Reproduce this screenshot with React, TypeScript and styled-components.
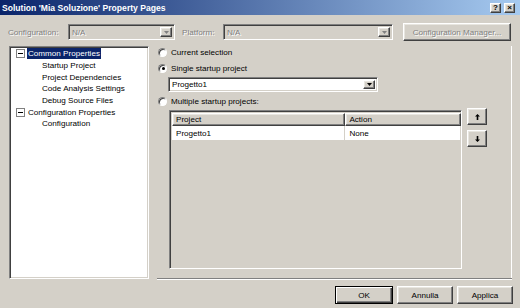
import React from "react";
import styled, { createGlobalStyle, css } from "styled-components";

const GlobalStyle = createGlobalStyle`
  html, body {
    margin: 0;
    padding: 0;
    background: #d4d0c8;
  }
  body {
    font-family: "Liberation Sans", Arial, sans-serif;
    font-size: 8.1px;
    color: #000;
  }
`;

const raised = css`
  border: 1px solid;
  border-color: #ffffff #404040 #404040 #ffffff;
  box-shadow: inset -1px -1px #808080, inset 1px 1px #e8e6e0;
  background: #d4d0c8;
`;

const sunken = css`
  border: 1px solid;
  border-color: #808080 #ffffff #ffffff #808080;
  box-shadow: inset 1px 1px #404040, inset -1px -1px #d4d0c8;
`;

const disabledText = css`
  color: #808080;
  text-shadow: 1px 1px 0 #ffffff;
`;

const Window = styled.div`
  width: 520px;
  height: 308px;
  display: flex;
  flex-direction: column;
  background: #d4d0c8;
  overflow: hidden;
`;

const TitleBar = styled.div`
  height: 15px;
  flex: none;
  display: flex;
  align-items: center;
  justify-content: space-between;
  padding: 0 5px 0 2px;
  background: linear-gradient(to right, #0a246a, #a6caf0);
`;

const Title = styled.span`
  color: #fff;
  font-weight: bold;
  font-size: 8.6px;
`;

const TitleButtons = styled.div`
  display: flex;
  gap: 3px;
`;

const CaptionButton = styled.div`
  ${raised};
  box-sizing: border-box;
  width: 11px;
  height: 10px;
  display: flex;
  align-items: center;
  justify-content: center;
  font-weight: bold;
  font-size: 8px;
  line-height: 1;
`;

const ConfigRow = styled.div`
  display: flex;
  align-items: center;
  height: 18px;
  margin-top: 8px;
  padding-left: 8px;
`;

const ConfigLabel = styled.span<{ $w: number; $ml?: number }>`
  ${disabledText};
  width: ${(p) => p.$w}px;
  margin-left: ${(p) => p.$ml ?? 0}px;
  flex: none;
`;

const Combo = styled.div<{ $w: number; $disabled?: boolean; $h?: number }>`
  ${sunken};
  box-sizing: border-box;
  width: ${(p) => p.$w}px;
  height: ${(p) => p.$h ?? 16}px;
  flex: none;
  display: flex;
  align-items: center;
  padding: 2px 2px 2px 3px;
  background: ${(p) => (p.$disabled ? "#d4d0c8" : "#ffffff")};
  ${(p) => p.$disabled && disabledText};
`;

const ComboText = styled.span`
  flex: 1;
  white-space: nowrap;
`;

const DropButton = styled.div<{ $disabled?: boolean }>`
  ${raised};
  box-sizing: border-box;
  width: 12px;
  height: 100%;
  display: flex;
  align-items: center;
  justify-content: center;
  color: ${(p) => (p.$disabled ? "#808080" : "#000")};
  text-shadow: none;
`;

const PushButton = styled.div<{ $w: number; $default?: boolean; $disabled?: boolean }>`
  ${raised};
  box-sizing: border-box;
  width: ${(p) => p.$w}px;
  height: 18px;
  flex: none;
  display: flex;
  align-items: center;
  justify-content: center;
  ${(p) => p.$disabled && disabledText};
  ${(p) =>
    p.$default &&
    css`
      border-color: #000;
      box-shadow: inset 1px 1px #ffffff, inset -1px -1px #404040, inset -2px -2px #808080;
    `}
`;

const Main = styled.div`
  display: flex;
  margin-top: 5px;
  height: 233px;
`;

const Tree = styled.div`
  ${sunken};
  box-sizing: border-box;
  margin-left: 9px;
  width: 140px;
  height: 233px;
  background: #fff;
  padding: 1px 0 0 6px;
`;

const TreeRow = styled.div<{ $child?: boolean }>`
  height: 11.67px;
  display: flex;
  align-items: center;
  padding-left: ${(p) => (p.$child ? 25 : 0)}px;
  white-space: nowrap;
`;

const Expander = styled.div`
  box-sizing: border-box;
  width: 9px;
  height: 9px;
  border: 1px solid #808080;
  background: #fff;
  margin-right: 2px;
  display: flex;
  align-items: center;
  justify-content: center;
  &::after {
    content: "";
    width: 5px;
    height: 1px;
    background: #000;
  }
`;

const TreeLabel = styled.span<{ $selected?: boolean }>`
  padding: 0 1px;
  line-height: 11px;
  ${(p) =>
    p.$selected &&
    css`
      background: #0a246a;
      color: #fff;
    `}
`;

const RightPanel = styled.div`
  margin-left: 8px;
  width: 355px;
  height: 233px;
  box-sizing: border-box;
  border-bottom: 1px solid #808080;
  box-shadow: 0 1px 0 #ffffff, inset -1px 0 0 #ffffff;
  padding-left: 1px;
  display: flex;
  flex-direction: column;
`;

const RadioRow = styled.div<{ $mt: number }>`
  height: 12px;
  margin-top: ${(p) => p.$mt}px;
  display: flex;
  align-items: center;
  gap: 4px;
`;

const Radio = styled.div<{ $checked?: boolean }>`
  box-sizing: border-box;
  width: 9px;
  height: 9px;
  border-radius: 50%;
  background: #fff;
  border: 1px solid;
  border-color: #808080 #ffffff #ffffff #808080;
  box-shadow: inset 1px 1px #404040;
  display: flex;
  align-items: center;
  justify-content: center;
  &::after {
    content: "";
    display: ${(p) => (p.$checked ? "block" : "none")};
    width: 3px;
    height: 3px;
    border-radius: 50%;
    background: #000;
    margin: 1px 0 0 1px;
  }
`;

const Indented = styled.div<{ $mt: number; $ml: number }>`
  margin-top: ${(p) => p.$mt}px;
  margin-left: ${(p) => p.$ml}px;
  display: flex;
  gap: 5px;
`;

const Grid = styled.div`
  ${sunken};
  box-sizing: border-box;
  width: 293px;
  height: 159px;
  padding: 2px;
  background: #d4d0c8;
`;

const GridRow = styled.div<{ $header?: boolean }>`
  display: flex;
  height: ${(p) => (p.$header ? 13 : 14)}px;
  background: ${(p) => (p.$header ? "#d4d0c8" : "#ffffff")};
  width: 289px;
`;

const HeaderCell = styled.div<{ $w: number }>`
  ${raised};
  box-sizing: border-box;
  width: ${(p) => p.$w}px;
  display: flex;
  align-items: center;
  padding-left: 3px;
`;

const Cell = styled.div<{ $w: number }>`
  box-sizing: border-box;
  width: ${(p) => p.$w}px;
  display: flex;
  align-items: center;
  padding-left: 4px;
  border-right: 1px solid #d4d0c8;
`;

const SideButtons = styled.div`
  display: flex;
  flex-direction: column;
  gap: 5px;
  margin-top: -2px;
`;

const SmallButton = styled.div`
  ${raised};
  box-sizing: border-box;
  width: 20px;
  height: 17px;
  display: flex;
  align-items: center;
  justify-content: center;
`;

const Footer = styled.div`
  display: flex;
  justify-content: flex-end;
  gap: 4px;
  margin-top: 7px;
  padding-right: 7px;
`;

const Arrow = ({ dir }: { dir: "up" | "down" }) => (
  <svg width="5" height="6" viewBox="0 0 5 6">
    {dir === "up" ? (
      <path d="M2.5 0 L5 2.5 L3.3 2.5 L3.3 6 L1.7 6 L1.7 2.5 L0 2.5 Z" fill="#000" />
    ) : (
      <path d="M2.5 6 L5 3.5 L3.3 3.5 L3.3 0 L1.7 0 L1.7 3.5 L0 3.5 Z" fill="#000" />
    )}
  </svg>
);

const ComboArrow = () => (
  <svg width="5" height="3" viewBox="0 0 5 3">
    <path d="M0 0 L5 0 L2.5 3 Z" fill="currentColor" />
  </svg>
);

const treeItems = [
  { label: "Common Properties", parent: true, selected: true },
  { label: "Startup Project" },
  { label: "Project Dependencies" },
  { label: "Code Analysis Settings" },
  { label: "Debug Source Files" },
  { label: "Configuration Properties", parent: true },
  { label: "Configuration" },
];

export default function App() {
  return (
    <>
      <GlobalStyle />
      <Window>
        <TitleBar>
          <Title>Solution 'Mia Soluzione' Property Pages</Title>
          <TitleButtons>
            <CaptionButton>?</CaptionButton>
            <CaptionButton>×</CaptionButton>
          </TitleButtons>
        </TitleBar>

        <ConfigRow>
          <ConfigLabel $w={60}>Configuration:</ConfigLabel>
          <Combo $w={107} $disabled>
            <ComboText>N/A</ComboText>
            <DropButton $disabled>
              <ComboArrow />
            </DropButton>
          </Combo>
          <ConfigLabel $w={41} $ml={7}>
            Platform:
          </ConfigLabel>
          <Combo $w={170} $disabled>
            <ComboText>N/A</ComboText>
            <DropButton $disabled>
              <ComboArrow />
            </DropButton>
          </Combo>
          <PushButton $w={108} $disabled style={{ marginLeft: 10 }}>
            Configuration Manager...
          </PushButton>
        </ConfigRow>

        <Main>
          <Tree>
            {treeItems.map((item) => (
              <TreeRow key={item.label} $child={!item.parent}>
                {item.parent && <Expander />}
                <TreeLabel $selected={item.selected}>{item.label}</TreeLabel>
              </TreeRow>
            ))}
          </Tree>

          <RightPanel>
            <RadioRow $mt={0}>
              <Radio />
              <span>Current selection</span>
            </RadioRow>
            <RadioRow $mt={4}>
              <Radio $checked />
              <span>Single startup project</span>
            </RadioRow>
            <Indented $mt={3} $ml={10}>
              <Combo $w={210} $h={15}>
                <ComboText>Progetto1</ComboText>
                <DropButton>
                  <ComboArrow />
                </DropButton>
              </Combo>
            </Indented>
            <RadioRow $mt={3}>
              <Radio />
              <span>Multiple startup projects:</span>
            </RadioRow>
            <Indented $mt={3} $ml={11}>
              <Grid>
                <GridRow $header>
                  <HeaderCell $w={174}>Project</HeaderCell>
                  <HeaderCell $w={116}>Action</HeaderCell>
                </GridRow>
                <GridRow>
                  <Cell $w={174}>Progetto1</Cell>
                  <Cell $w={116}>None</Cell>
                </GridRow>
              </Grid>
              <SideButtons>
                <SmallButton>
                  <Arrow dir="up" />
                </SmallButton>
                <SmallButton>
                  <Arrow dir="down" />
                </SmallButton>
              </SideButtons>
            </Indented>
          </RightPanel>
        </Main>

        <Footer>
          <PushButton $w={58} $default>
            OK
          </PushButton>
          <PushButton $w={56}>Annulla</PushButton>
          <PushButton $w={56}>Applica</PushButton>
        </Footer>
      </Window>
    </>
  );
}
